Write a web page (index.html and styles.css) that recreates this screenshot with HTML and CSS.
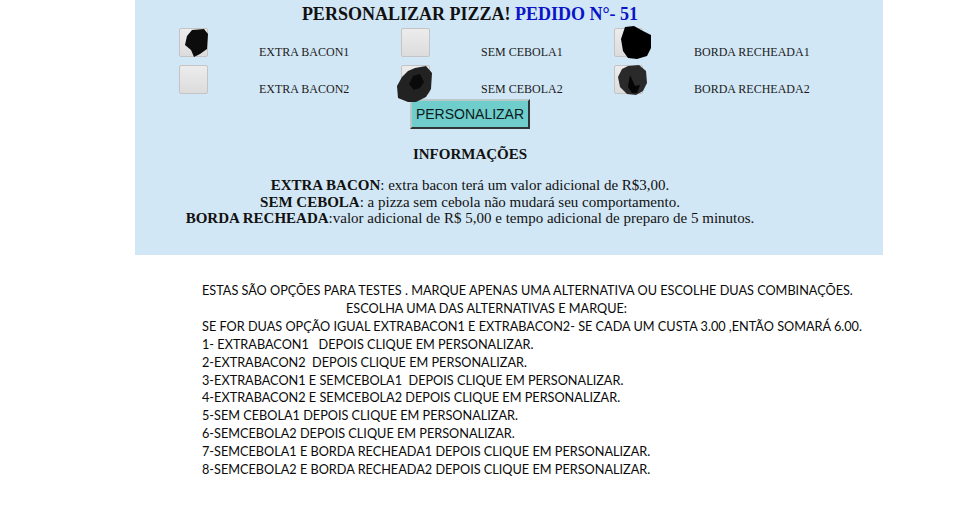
FILE: index.html
```html
<!DOCTYPE html>
<html lang="pt">
<head>
<meta charset="utf-8">
<title>Personalizar Pizza</title>
<link rel="stylesheet" href="styles.css">
</head>
<body>
<section class="panel">
  <div class="inner">
    <h1 class="title">PERSONALIZAR PIZZA! <span class="order">PEDIDO N°- 51</span></h1>
    <div class="options">
      <div class="opt">
        <span class="box">
          <svg class="blob" width="40" height="40" viewBox="0 0 40 40"><path d="M12 1 L24 0 L28 5 L27 20 L20 25 L14 28 L11 21 L5 16 L7 7 Z" fill="#0c0c0c"/></svg>
        </span>
        <span class="label">EXTRA BACON1</span>
      </div>
      <div class="opt">
        <span class="box"></span>
        <span class="label">SEM CEBOLA1</span>
      </div>
      <div class="opt">
        <span class="box">
          <svg class="blob" width="40" height="40" viewBox="0 0 40 40"><path d="M10 -2 L19 -3 L28 2 L36 6 L36 19 L32 27 L22 30 L13 29 L8 22 L6 10 Z" fill="#000"/></svg>
        </span>
        <span class="label">BORDA RECHEADA1</span>
      </div>
      <div class="opt">
        <span class="box"></span>
        <span class="label">EXTRA BACON2</span>
      </div>
      <div class="opt">
        <span class="box">
          <svg class="blob" width="44" height="44" viewBox="0 0 44 44"><path d="M13 2 L24 0 L30 7 L29 23 L24 31 L14 36 L6 36 L-4 32 L-5 20 L0 11 L6 5 Z" fill="#222"/><path d="M11 10 L18 8 L22 16 L18 22 L12 24 L7 18 Z" fill="#0a0a0a"/></svg>
        </span>
        <span class="label">SEM CEBOLA2</span>
      </div>
      <div class="opt">
        <span class="box">
          <svg class="blob" width="40" height="40" viewBox="0 0 40 40"><path d="M13 0 L24 -1 L31 5 L32 17 L28 25 L21 29 L12 28 L5 21 L3 11 L7 3 Z" fill="#2a2a2a"/><path d="M15 9 L20 20 L25 19 L22 27 L17 27 L13 21 Z" fill="#050505"/></svg>
        </span>
        <span class="label">BORDA RECHEADA2</span>
      </div>
    </div>
    <button class="btn" type="button">PERSONALIZAR</button>
    <h2 class="info-title">INFORMAÇÕES</h2>
    <div class="info">
      <p><b>EXTRA BACON</b>: extra bacon terá um valor adicional de R$3,00.</p>
      <p><b>SEM CEBOLA</b>: a pizza sem cebola não mudará seu comportamento.</p>
      <p><b>BORDA RECHEADA</b>:valor adicional de R$ 5,00 e tempo adicional de preparo de 5 minutos.</p>
    </div>
  </div>
</section>
<section class="notes">
  <p>ESTAS SÃO OPÇÕES PARA TESTES . MARQUE APENAS UMA ALTERNATIVA OU ESCOLHE DUAS COMBINAÇÕES.</p>
  <p class="indent">ESCOLHA UMA DAS ALTERNATIVAS E MARQUE:</p>
  <p>SE FOR DUAS OPÇÃO IGUAL EXTRABACON1 E EXTRABACON2- SE CADA UM CUSTA 3.00 ,ENTÃO SOMARÁ 6.00.</p>
  <p>1- EXTRABACON1&nbsp;&nbsp; DEPOIS CLIQUE EM PERSONALIZAR.</p>
  <p>2-EXTRABACON2&nbsp; DEPOIS CLIQUE EM PERSONALIZAR.</p>
  <p>3-EXTRABACON1 E SEMCEBOLA1&nbsp; DEPOIS CLIQUE EM PERSONALIZAR.</p>
  <p>4-EXTRABACON2 E SEMCEBOLA2 DEPOIS CLIQUE EM PERSONALIZAR.</p>
  <p>5-SEM CEBOLA1 DEPOIS CLIQUE EM PERSONALIZAR.</p>
  <p>6-SEMCEBOLA2 DEPOIS CLIQUE EM PERSONALIZAR.</p>
  <p>7-SEMCEBOLA1 E BORDA RECHEADA1 DEPOIS CLIQUE EM PERSONALIZAR.</p>
  <p>8-SEMCEBOLA2 E BORDA RECHEADA2 DEPOIS CLIQUE EM PERSONALIZAR.</p>
</section>
</body>
</html>
```
FILE: styles.css
```css
html, body {
  margin: 0;
  padding: 0;
  background: #fff;
}
body {
  font-family: "Liberation Serif", "Times New Roman", serif;
  color: #111;
}
.panel {
  margin-left: 135px;
  width: 748px;
  height: 255px;
  background: #d2e7f5;
  box-sizing: border-box;
  padding-top: 4px;
}
.inner {
  width: 670px;
  text-align: center;
}
.title {
  margin: 0;
  font-size: 18px;
  line-height: 20px;
  font-weight: bold;
  color: #111;
}
.order {
  color: #0a14c8;
}
.options {
  display: grid;
  grid-template-columns: 222px 213px auto;
  grid-auto-rows: 37px;
  padding-left: 44px;
  margin-top: 3px;
  text-align: left;
}
.opt {
  display: flex;
  align-items: flex-end;
  height: 37px;
}
.box {
  position: relative;
  width: 27px;
  height: 27px;
  margin-bottom: 7px;
  border: 1px solid #c4c4c4;
  border-radius: 2px;
  background: linear-gradient(#ececec, #dcdcdc);
  flex: none;
}
.blob {
  position: absolute;
  left: 0;
  top: 0;
  overflow: visible;
}
.label {
  margin-left: 51px;
  font-size: 12px;
  line-height: 14px;
  margin-bottom: 5px;
  color: #1a1a1a;
  white-space: nowrap;
}
.btn {
  display: block;
  margin: -2px auto 0;
  width: 120px;
  height: 30px;
  background: #6fcdcc;
  border: 2px outset #b8c8c8;
  border-right-color: #7c8a8a;
  border-bottom-color: #7c8a8a;
  font-family: "Liberation Sans", Arial, sans-serif;
  font-size: 14px;
  color: #0d1a1a;
  padding: 0;
}
.info-title {
  margin: 16px 0 0;
  font-size: 15px;
  line-height: 18px;
  font-weight: bold;
}
.info {
  margin-top: 14px;
  font-size: 15px;
  line-height: 16.5px;
}
.info p {
  margin: 0;
}
.notes {
  margin-top: 27px;
  padding-left: 202px;
  font-family: Lato, "Open Sans", sans-serif;
  font-size: 12.7px;
  line-height: 17.9px;
  color: #0a0a0a;
}
.notes p {
  margin: 0;
  white-space: pre;
}
.notes .indent {
  padding-left: 144px;
}
```
